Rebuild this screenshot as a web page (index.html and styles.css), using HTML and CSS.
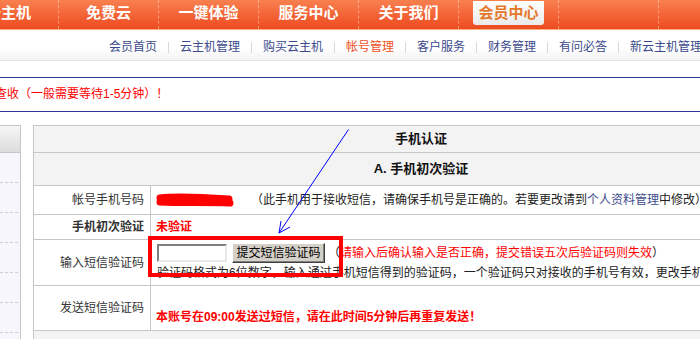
FILE: index.html
```html
<!DOCTYPE html>
<html lang="zh-CN">
<head>
    <meta charset="UTF-8">
    <meta name="viewport" content="width=device-width, initial-scale=1.0">
    <title>会员中心 - 手机认证</title>
    <link rel="stylesheet" href="styles.css">
</head>
<body>
    <div class="topnav">
        <ul class="menu">
            <li>云主机</li>
            <li>免费云</li>
            <li>一键体验</li>
            <li>服务中心</li>
            <li>关于我们</li>
            <li class="on"><span>会员中心</span></li>
            <li></li>
        </ul>
    </div>

    <div class="subnav">
        <a href="#">会员首页</a><i></i>
        <a href="#">云主机管理</a><i></i>
        <a href="#">购买云主机</a><i></i>
        <a href="#" class="cur">帐号管理</a><i></i>
        <a href="#">客户服务</a><i></i>
        <a href="#">财务管理</a><i></i>
        <a href="#">有问必答</a><i></i>
        <a href="#">新云主机管理</a>
    </div>

    <div class="notice">
        <p>查收（一般需要等待1-5分钟）！</p>
    </div>

    <div class="content">
        <div class="side">
            <div class="side-hd"></div>
            <ul class="side-list">
                <li></li><li></li><li></li><li></li><li></li><li></li>
            </ul>
        </div>

        <table class="form">
            <colgroup>
                <col class="c-label">
                <col>
            </colgroup>
            <tr class="r-title">
                <th colspan="2">手机认证</th>
            </tr>
            <tr class="r-step">
                <th colspan="2">A. 手机初次验证</th>
            </tr>
            <tr class="r-phone">
                <td class="label">帐号手机号码</td>
                <td class="val">
                    <svg class="scrawl" width="80" height="14" viewBox="0 0 80 14">
                        <path d="M5 5 C20 3 45 4 74 6 M5 9 C25 10 50 9 75 10" fill="none" stroke="#f00" stroke-width="7" stroke-linecap="round"/>
                    </svg>（此手机用于接收短信，请确保手机号是正确的。若要更改请到<a href="#">个人资料管理</a>中修改）
                </td>
            </tr>
            <tr class="r-state">
                <td class="label"><b>手机初次验证</b></td>
                <td class="val"><b class="red">未验证</b></td>
            </tr>
            <tr class="r-code">
                <td class="label">输入短信验证码</td>
                <td class="val top">
                    <div class="code-line">
                        <input type="text" class="code-input">
                        <button class="btn">提交短信验证码</button>
                        <span>（<em class="red">请输入后确认输入是否正确，提交错误五次后验证码则失效</em>）</span>
                    </div>
                    <div class="tip">验证码格式为6位数字，输入通过手机短信得到的验证码，一个验证码只对接收的手机号有效，更改手机号码后需重新验证。</div>
                </td>
            </tr>
            <tr class="r-send">
                <td class="label">发送短信验证码</td>
                <td class="val top"><b class="red">本账号在09:00发送过短信，请在此时间5分钟后再重复发送！</b></td>
            </tr>
            <tr class="r-foot">
                <td colspan="2"></td>
            </tr>
        </table>
    </div>

    <!-- 截图上的标注 -->
    <div class="mark-box"></div>
    <svg class="arrow" width="700" height="339" viewBox="0 0 700 339">
        <path d="M348.5 129.5 L279 233 M279 233 L281 221 M279 233 L290 227" fill="none" stroke="#00f" stroke-width="1"/>
    </svg>
</body>
</html>
```

FILE: styles.css
```css
html,
body {
    margin: 0;
    overflow: hidden;
}

body {
    width: 700px;
    height: 339px;
    background: #fff;
    color: #222;
    font-family: "Liberation Sans", "Noto Sans CJK SC", sans-serif;
    font-size: 12px;
    line-height: 18px;
}

/* 顶部主导航 */
.topnav {
    height: 29px;
    background: linear-gradient(#f8804f, #ee4a20);
    border-bottom: 1px solid #fbb07a;
}

.menu {
    display: flex;
    margin: 0 0 0 -41px;
    padding: 0;
    list-style: none;
}

.menu li {
    flex: none;
    width: 100px;
    height: 29px;
    box-sizing: border-box;
    border-right: 1px dashed rgba(255, 200, 170, .6);
    text-align: center;
    color: #fff;
    font-size: 15px;
    font-weight: bold;
    line-height: 25px;
}

.menu li.on span {
    display: inline-block;
    width: 71px;
    height: 24px;
    line-height: 23px;
    background: linear-gradient(#fff, #eaeaea);
    border-radius: 0 0 3px 3px;
    color: #e5782a;
}

/* 二级导航 */
.subnav {
    height: 30px;
    display: flex;
    align-items: center;
    padding-left: 109px;
    background: linear-gradient(#fff 60%, #f3f3f3);
    border-bottom: 1px solid #e3e3e3;
    white-space: nowrap;
}

.subnav a {
    color: #3c4a8c;
    text-decoration: none;
    margin-top: 4px;
}

.subnav a.cur {
    color: #f14f1b;
}

.subnav i {
    flex: none;
    width: 1px;
    height: 11px;
    margin: 4px 11px 0;
    background: #d8d8d8;
}

/* 提示 */
.notice {
    margin-top: 16px;
    height: 33px;
    border-top: 1px solid #2b3990;
    border-bottom: 1px solid #2b3990;
    color: #f00;
    line-height: 33px;
}

.notice p {
    margin: 0 0 0 -5px;
    white-space: nowrap;
}

/* 内容区 */
.content {
    display: flex;
    align-items: flex-start;
    gap: 12px;
    margin-top: 13px;
}

.side {
    flex: none;
    width: 180px;
    height: 260px;
    margin-left: -161px;
    border: 1px solid #c3c7cb;
    border-bottom: 0;
    background: #f8f6fd;
}

.side-hd {
    height: 26px;
    background: linear-gradient(#f6f6f6, #dcdcdc);
    border-bottom: 1px solid #c3c7cb;
}

.side-list {
    margin: 0;
    padding: 0;
    list-style: none;
}

.side-list li {
    height: 29px;
    margin-right: 2px;
    border-bottom: 1px dashed #cfcfcf;
}

.form {
    flex: none;
    width: 776px;
    border-collapse: separate;
    border-spacing: 0;
    border: 1px solid #c3c7cb;
    border-bottom: 0;
    table-layout: fixed;
}

.c-label {
    width: 117px;
}

.form th,
.form td {
    padding: 0;
    border-bottom: 1px solid #c3c7cb;
    white-space: nowrap;
}

.form th {
    background: #f3f3f3;
    color: #111;
    font-size: 13px;
    font-weight: bold;
    text-align: center;
}

.r-title { height: 27px; }
.r-step { height: 33px; }
.r-phone { height: 29px; }
.r-state { height: 25px; }
.r-code { height: 46px; }
.r-send { height: 45px; }
.r-foot { height: 30px; }

.r-foot td {
    background: #f3f3f3;
    border-bottom: 0;
}

.form .label {
    padding-right: 6px;
    border-right: 1px solid #c3c7cb;
    text-align: right;
    color: #333;
}

.form .val {
    padding-left: 5px;
    overflow: hidden;
}

.form .val.top {
    vertical-align: top;
}

.val a {
    color: #3c4a8c;
    text-decoration: none;
}

.red {
    color: #f00;
    font-style: normal;
}

.scrawl {
    vertical-align: middle;
    margin: -2px 16px 0 -1px;
}

.r-code .val {
    padding-top: 3px;
}

.code-line {
    display: flex;
    align-items: center;
    height: 20px;
}

.code-input {
    width: 70px;
    height: 18px;
    margin: 0 5px 0 1px;
    padding: 0;
    box-sizing: border-box;
    border: 2px solid;
    border-color: #808080 #e8e8e8 #e8e8e8 #808080;
    background: #fff;
}

.btn {
    height: 20px;
    width: 93px;
    margin: 0 3px 0 0;
    padding: 0;
    box-sizing: border-box;
    border: 1px solid;
    border-color: #fff #404040 #404040 #fff;
    box-shadow: inset -1px -1px #808080;
    background: #d4d0c8;
    color: #000;
    font-family: inherit;
    font-size: 12px;
    line-height: 16px;
}

.tip {
    margin-top: 1px;
    margin-left: 1px;
}

.r-send .val {
    padding-top: 22px;
}

/* 标注 */
.mark-box {
    position: absolute;
    left: 148px;
    top: 236px;
    width: 195px;
    height: 41px;
    box-sizing: border-box;
    border: 4px solid #f00;
}

.arrow {
    position: absolute;
    left: 0;
    top: 0;
    pointer-events: none;
}
```
